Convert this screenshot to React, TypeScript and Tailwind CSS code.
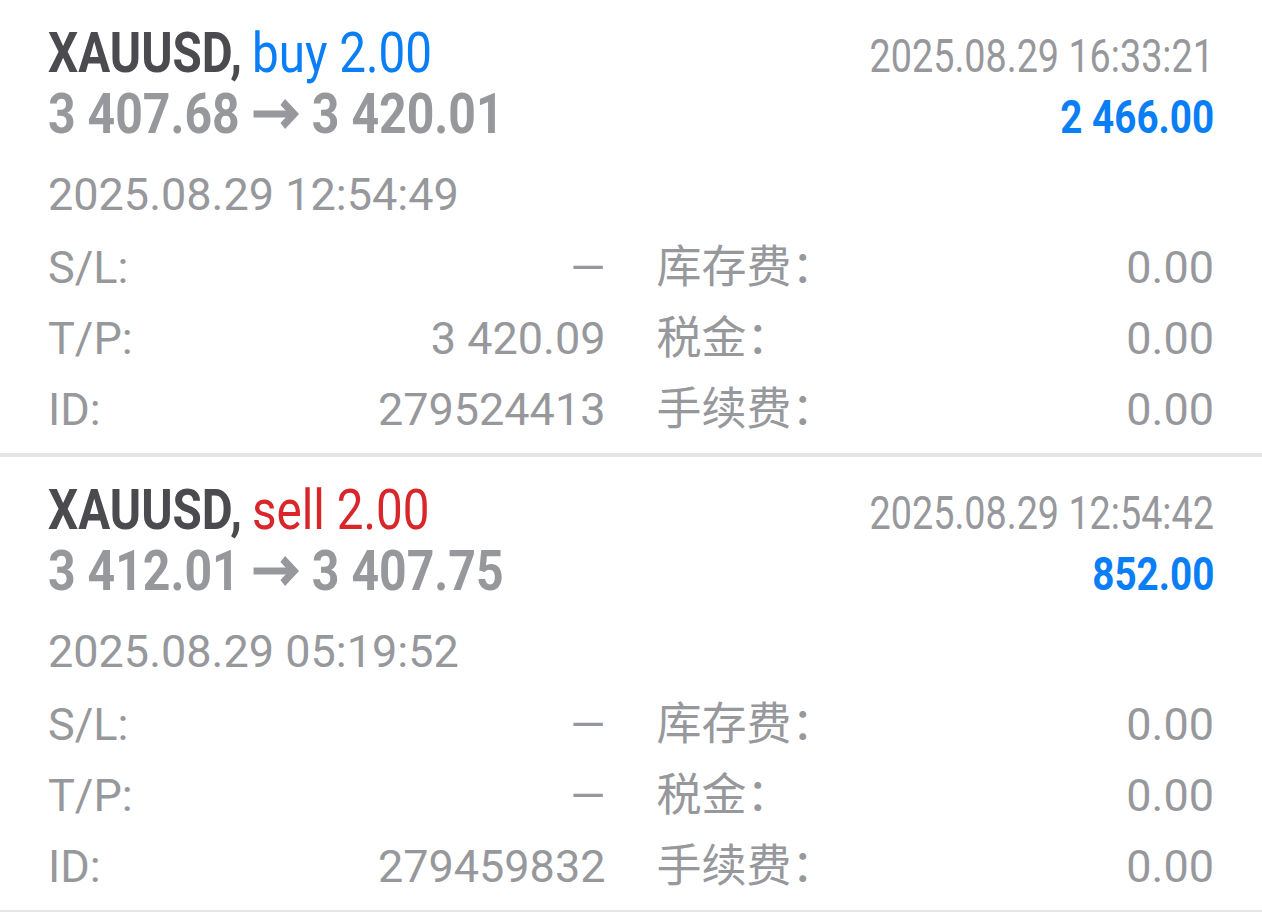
import React from "react";

type Trade = {
  symbol: string;
  side: "buy" | "sell";
  volume: string;
  openPrice: string;
  closePrice: string;
  closeTime: string;
  profit: string;
  openTime: string;
  sl: string;
  tp: string;
  id: string;
};

const trades: Trade[] = [
  {
    symbol: "XAUUSD",
    side: "buy",
    volume: "2.00",
    openPrice: "3 407.68",
    closePrice: "3 420.01",
    closeTime: "2025.08.29 16:33:21",
    profit: "2 466.00",
    openTime: "2025.08.29 12:54:49",
    sl: "—",
    tp: "3 420.09",
    id: "279524413",
  },
  {
    symbol: "XAUUSD",
    side: "sell",
    volume: "2.00",
    openPrice: "3 412.01",
    closePrice: "3 407.75",
    closeTime: "2025.08.29 12:54:42",
    profit: "852.00",
    openTime: "2025.08.29 05:19:52",
    sl: "—",
    tp: "—",
    id: "279459832",
  },
];

// heavy right arrow between open and close price
function PriceArrow() {
  return (
    <svg
      width="56"
      height="30"
      viewBox="0 0 56 30"
      className="inline-block align-[4px]"
      aria-label="→"
    >
      <rect x="2" y="11.5" width="44" height="7" fill="currentColor" />
      <polyline
        points="36,3 49,15 36,27"
        fill="none"
        stroke="currentColor"
        strokeWidth="8"
        strokeLinejoin="miter"
      />
    </svg>
  );
}

// one label / value pair inside the details grid
function Field({ label, value }: { label: string; value: string }) {
  return (
    <div className="flex items-baseline justify-between leading-[71px]">
      <span>{label}</span>
      <span>{value}</span>
    </div>
  );
}

function TradeRow({ trade }: { trade: Trade }) {
  const sideColor = trade.side === "buy" ? "text-[#0a7ef5]" : "text-[#d9262b]";

  return (
    <div className="border-b-4 border-[#e5e5e5] px-12 pt-[23px] pb-2">
      {/* header: symbol + close time (condensed) */}
      <div className="flex items-baseline justify-between">
        <div className="text-[56px] leading-[61px]">
          <span className="inline-block origin-left scale-x-[0.85] whitespace-nowrap">
            <span className="font-bold text-[#4a4a4f]">{trade.symbol},</span>{" "}
            <span className={`-ml-[2px] ${sideColor}`}>
              {trade.side} {trade.volume}
            </span>
          </span>
        </div>
        <div className="text-[46px] leading-[54px] text-[#97989c]">
          <span className="inline-block origin-right scale-x-[0.82] whitespace-nowrap">
            {trade.closeTime}
          </span>
        </div>
      </div>

      {/* prices + profit */}
      <div className="flex items-baseline justify-between">
        <div className="text-[56px] font-bold leading-[61px] text-[#97989c]">
          <span className="inline-block origin-left scale-x-[0.86] whitespace-nowrap">
            {trade.openPrice} <PriceArrow /> {trade.closePrice}
          </span>
        </div>
        <div className="text-[46px] font-bold leading-[54px] text-[#0a7ef5]">
          <span className="inline-block origin-right scale-x-[0.84] whitespace-nowrap">
            {trade.profit}
          </span>
        </div>
      </div>

      <div className="mt-[22px] text-[45px] leading-[56px] text-[#97989c]">
        {trade.openTime}
      </div>

      <div className="mt-[9px] grid grid-cols-2 items-baseline gap-x-[51px] text-[45px] text-[#97989c]">
        <Field label="S/L:" value={trade.sl} />
        <Field label="库存费：" value="0.00" />
        <Field label="T/P:" value={trade.tp} />
        <Field label="税金：" value="0.00" />
        <Field label="ID:" value={trade.id} />
        <Field label="手续费：" value="0.00" />
      </div>
    </div>
  );
}

export default function App() {
  return (
    <div className="min-h-screen w-[1262px] bg-white font-['Roboto','Noto_Sans_CJK_SC',sans-serif]">
      {trades.map((t) => (
        <TradeRow key={t.id} trade={t} />
      ))}
    </div>
  );
}
